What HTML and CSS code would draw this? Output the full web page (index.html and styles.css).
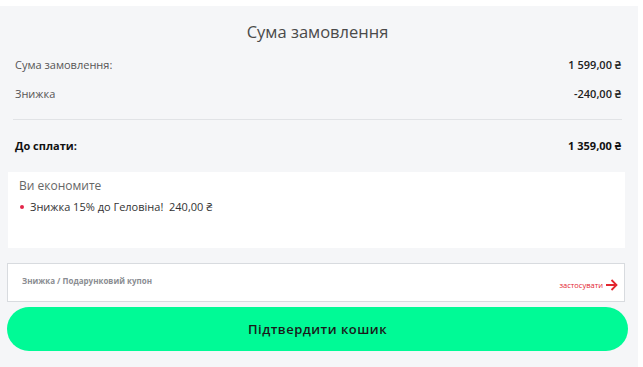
FILE: index.html
```html
<!DOCTYPE html>
<html>
<head>
  <title>Кошик</title>
  <link rel="stylesheet" href="styles.css">
</head>
<body>
  <div id="summary">
    <h2 class="summary-title">Сума замовлення</h2>
    <div class="summary-row">
      <span>Сума замовлення:</span>
      <span class="amount">1 599,00 ₴</span>
    </div>
    <div class="summary-row">
      <span>Знижка</span>
      <span class="amount">-240,00 ₴</span>
    </div>
    <div class="summary-row total">
      <span>До сплати:</span>
      <span class="amount">1 359,00 ₴</span>
    </div>

    <div class="savings">
      <div class="savings-title">Ви економите</div>
      <ul class="savings-list">
        <li>Знижка 15% до Геловіна!&nbsp; 240,00 ₴</li>
      </ul>
    </div>

    <form class="coupon">
      <input type="text" id="coupon-code" placeholder="Знижка / Подарунковий купон" />
      <button type="button" class="coupon-apply">
        застосувати
        <svg width="13" height="12" viewBox="0 0 13 12">
          <path d="M1 6 H11.5 M6.5 1 L11.5 6 L6.5 11" fill="none" stroke="#e3262f" stroke-width="1.8"/>
        </svg>
      </button>
    </form>

    <button type="submit" id="confirm-button">Підтвердити кошик</button>
  </div>
</body>
</html>
```

FILE: styles.css
```css
body {
  margin: 0;
  padding-top: 6px;
  background-color: #fff;
  font-family: "Open Sans", "Noto Sans", sans-serif;
}

#summary {
  width: 638px;
  height: 361px;
  box-sizing: border-box;
  padding: 14px 10px 0 7px;
  background-color: #f5f6f8;
}

.summary-title {
  margin: 0 0 7px;
  text-align: center;
  font-size: 16.5px;
  font-weight: 400;
  color: #4a4a4a;
}

.summary-row {
  display: flex;
  justify-content: space-between;
  padding: 0 7px 0 8px;
  height: 29px;
  align-items: center;
  font-size: 11px;
  color: #555;
}

.summary-row .amount {
  font-weight: 600;
  color: #222;
}

.summary-row.total {
  margin: 11px 6px 0;
  padding: 8px 1px 0 2px;
  border-top: 1px solid #e1e3e6;
  height: 35px;
  font-weight: 700;
  color: #111;
}

.summary-row.total .amount {
  font-weight: 700;
  color: #111;
}

.savings {
  margin: 9px 3px 0 1px;
  height: 76px;
  padding: 5px 11px;
  box-sizing: border-box;
  background-color: #fff;
}

.savings-title {
  font-size: 12px;
  color: #666;
}

.savings-list {
  list-style: none;
  margin: 5px 0 0;
  padding: 0;
  font-size: 11px;
  color: #333;
}

.savings-list li::before {
  content: "";
  display: inline-block;
  width: 4px;
  height: 4px;
  margin: 0 6px 2px 1px;
  border-radius: 50%;
  background-color: #e3264a;
}

.coupon {
  display: flex;
  align-items: flex-end;
  margin: 15px 3px 0 0;
  height: 39px;
  box-sizing: border-box;
  border: 1px solid #d8dbdf;
  background-color: #fff;
}

#coupon-code {
  flex: 1;
  align-self: stretch;
  border: none;
  padding: 0 0 4px 14px;
  outline: none;
  font-family: inherit;
  font-size: 8px;
  font-weight: 700;
  background: transparent;
}

#coupon-code::placeholder {
  color: #8a8d92;
}

.coupon-apply {
  display: flex;
  align-items: center;
  gap: 2px;
  margin: 0 6px 10px 0;
  padding: 0;
  border: none;
  background: none;
  font-family: inherit;
  font-size: 7.5px;
  color: #e3262f;
  cursor: pointer;
}

#confirm-button {
  display: block;
  width: 621px;
  height: 44px;
  margin-top: 5px;
  border: none;
  border-radius: 22px;
  background-color: #00fa96;
  font-family: inherit;
  font-size: 13px;
  font-weight: 600;
  letter-spacing: 0.5px;
  color: #1a1a1a;
  cursor: pointer;
}
```
